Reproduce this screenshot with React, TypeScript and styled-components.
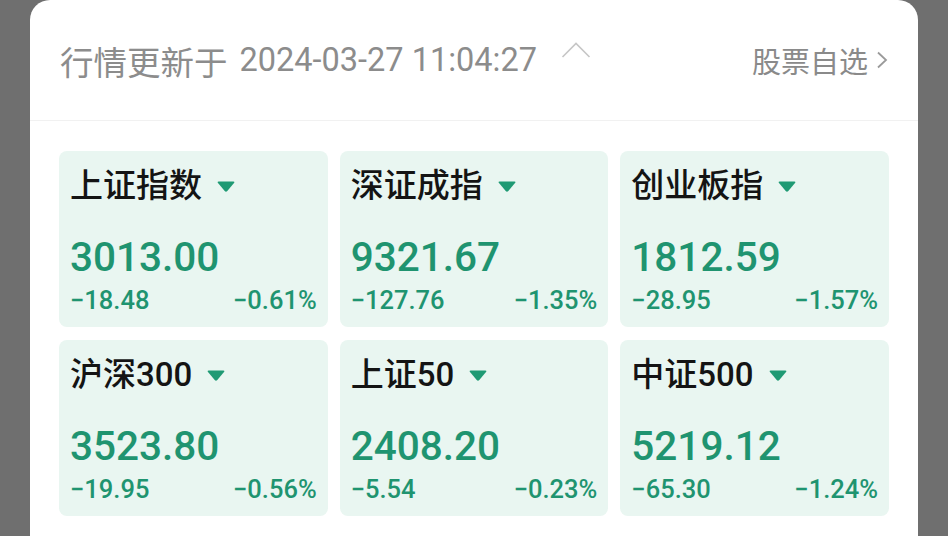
import React from 'react';
import styled, { createGlobalStyle } from 'styled-components';

const GlobalStyle = createGlobalStyle`
  html, body {
    margin: 0;
    padding: 0;
    background: #6f6f6f;
  }
  body {
    font-family: Roboto, 'Noto Sans CJK SC', sans-serif;
  }
`;

const Page = styled.div`
  display: flex;
  padding-left: 30px;
  height: 536px;
  overflow: hidden;
`;

const Card = styled.div`
  width: 888px;
  min-height: 560px;
  background: #ffffff;
  border-radius: 20px 20px 0 0;
`;

const Header = styled.div`
  display: flex;
  align-items: center;
  height: 120px;
  padding: 0 30px;
  border-bottom: 1px solid #f1f1f1;
`;

const UpdateText = styled.span`
  font-size: 33.5px;
  color: #8c8c8c;
  font-weight: 400;
`;

const UpdateTime = styled.span`
  margin-left: 12px;
  font-size: 32.5px;
  color: #8c8c8c;
  font-weight: 400;
`;

const Caret = styled.svg`
  margin-left: 24px;
  margin-top: -20px;
`;

const Watchlist = styled.a`
  margin-left: auto;
  display: flex;
  align-items: center;
  gap: 8px;
  font-size: 29px;
  color: #8a8a8a;
  text-decoration: none;
`;

const Grid = styled.div`
  display: grid;
  grid-template-columns: repeat(3, 1fr);
  column-gap: 12px;
  row-gap: 13px;
  padding: 30px 29px 0 29px;
`;

const Tile = styled.div`
  height: 176px;
  box-sizing: border-box;
  padding: 15px 11px 0;
  background: #e9f6f1;
  border-radius: 8px;
`;

const TitleRow = styled.div`
  display: flex;
  align-items: center;
  gap: 14px;
  font-size: 33px;
  line-height: 40px;
  font-weight: 500;
  color: #141414;
`;

const Price = styled.div`
  margin-top: 29px;
  font-size: 40.5px;
  line-height: 44px;
  font-weight: 500;
  color: #1f9470;
`;

const ChangeRow = styled.div`
  display: flex;
  justify-content: space-between;
  margin-top: 7px;
  font-size: 25.5px;
  line-height: 28px;
  font-weight: 500;
  color: #1f9470;
`;

const indices = [
  { name: '上证指数', price: '3013.00', diff: '−18.48', pct: '−0.61%' },
  { name: '深证成指', price: '9321.67', diff: '−127.76', pct: '−1.35%' },
  { name: '创业板指', price: '1812.59', diff: '−28.95', pct: '−1.57%' },
  { name: '沪深300', price: '3523.80', diff: '−19.95', pct: '−0.56%' },
  { name: '上证50', price: '2408.20', diff: '−5.54', pct: '−0.23%' },
  { name: '中证500', price: '5219.12', diff: '−65.30', pct: '−1.24%' },
];

const DropTriangle = () => (
  <svg width="20" height="13" viewBox="0 0 20 13">
    <path
      d="M2.5 1.5 H17.5 Q19.2 1.5 18 3 L11.3 11 Q10 12.4 8.7 11 L2 3 Q0.8 1.5 2.5 1.5 Z"
      fill="#1f9a74"
    />
  </svg>
);

export default function App(): JSX.Element {
  return (
    <>
      <GlobalStyle />
      <Page>
        <Card>
          <Header>
            <UpdateText>行情更新于</UpdateText>
            <UpdateTime>2024-03-27 11:04:27</UpdateTime>
            <Caret width="30" height="18" viewBox="0 0 30 18">
              <path d="M1.5 16 L15 2.5 L28.5 16" fill="none" stroke="#c6c6c6" strokeWidth="1.6" />
            </Caret>
            <Watchlist href="#">
              股票自选
              <svg width="12" height="18" viewBox="0 0 12 18">
                <path d="M2 1.5 L10 9 L2 16.5" fill="none" stroke="#9a9a9a" strokeWidth="1.8" />
              </svg>
            </Watchlist>
          </Header>
          <Grid>
            {indices.map((item) => (
              <Tile key={item.name}>
                <TitleRow>
                  {item.name}
                  <DropTriangle />
                </TitleRow>
                <Price>{item.price}</Price>
                <ChangeRow>
                  <span>{item.diff}</span>
                  <span>{item.pct}</span>
                </ChangeRow>
              </Tile>
            ))}
          </Grid>
        </Card>
      </Page>
    </>
  );
}
